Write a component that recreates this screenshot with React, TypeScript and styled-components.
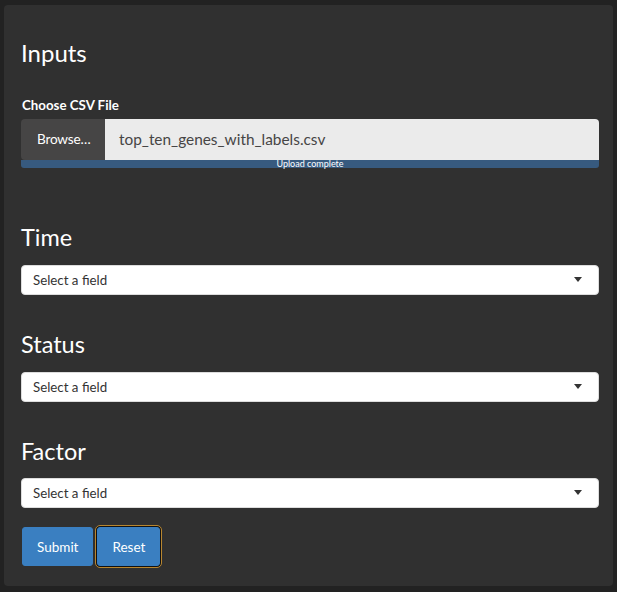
import React from 'react';
import styled, { createGlobalStyle, css } from 'styled-components';

const GlobalStyle = createGlobalStyle`
  html, body {
    margin: 0;
    background: #222222;
  }
  body {
    padding: 5px 4px 0;
    font-family: Lato, 'Open Sans', sans-serif;
    color: #ffffff;
  }
`;

const Well = styled.div`
  box-sizing: border-box;
  width: 609px;
  height: 581px;
  padding: 35px 14px 0 17px;
  background: #303030;
  border-radius: 4px;
`;

const Title = styled.h3`
  margin: 0;
  font-size: 24px;
  font-weight: 400;
  line-height: 1.1;
`;

const Label = styled.label`
  display: block;
  margin: 30.5px 0 5.25px 1px;
  font-size: 13.3px;
  font-weight: 700;
  line-height: 16.8px;
`;

const FileGroup = styled.div`
  display: flex;
  height: 41px;
`;

const BrowseButton = styled.span`
  display: flex;
  align-items: center;
  width: 84px;
  padding-left: 16px;
  box-sizing: border-box;
  background: #464545;
  border-radius: 4px 0 0 4px;
  font-size: 13.6px;
  letter-spacing: -0.2px;
`;

const FileName = styled.div`
  flex: 1;
  display: flex;
  align-items: center;
  padding-left: 14px;
  background: #ebebeb;
  color: #464545;
  border-radius: 0 4px 0 0;
  font-size: 15.4px;
`;

const Progress = styled.div`
  height: 8px;
  background: #375a7f;
  border-radius: 0 0 3px 3px;
  font-size: 9px;
  line-height: 8px;
  text-align: center;
  color: #ffffff;
`;

const Field = styled.div<{ $gap: number }>`
  margin-top: ${(p) => p.$gap}px;
`;

const FieldTitle = styled.h4`
  margin: 0 0 14px;
  font-size: 23.5px;
  font-weight: 400;
  line-height: 1.1;
`;

const Select = styled.div`
  position: relative;
  box-sizing: border-box;
  height: 30px;
  display: flex;
  align-items: center;
  padding-left: 11px;
  background: #ffffff;
  border: 1px solid #dddddd;
  border-radius: 4px;
  color: #333333;
  font-size: 13.3px;
`;

const Caret = styled.span`
  position: absolute;
  right: 16px;
  top: 11px;
  border-left: 4.5px solid transparent;
  border-right: 4.5px solid transparent;
  border-top: 5px solid #333333;
`;

const Actions = styled.div`
  display: flex;
  gap: 4px;
  margin: 19px 0 0 1px;
`;

const Button = styled.button<{ $focused?: boolean }>`
  height: 39px;
  padding: 0 14px;
  background: #3a7fc1;
  border: 1px solid #3a7fc1;
  border-radius: 3px;
  color: #ffffff;
  font-family: Lato, 'Open Sans', sans-serif;
  font-size: 13.5px;
  ${(p) =>
    p.$focused &&
    css`
      box-shadow: 0 0 0 1px #111111;
      outline: 1px solid #b8862f;
      outline-offset: 1px;
    `}
`;

const fields = [
  { name: 'Time', gap: 57 },
  { name: 'Status', gap: 37 },
  { name: 'Factor', gap: 37 },
];

const App = () => (
  <>
    <GlobalStyle />
    <Well>
      <Title>Inputs</Title>
      <Label>Choose CSV File</Label>
      <FileGroup>
        <BrowseButton>Browse…</BrowseButton>
        <FileName>top_ten_genes_with_labels.csv</FileName>
      </FileGroup>
      <Progress>Upload complete</Progress>
      {fields.map((field) => (
        <Field key={field.name} $gap={field.gap}>
          <FieldTitle>{field.name}</FieldTitle>
          <Select>
            Select a field
            <Caret />
          </Select>
        </Field>
      ))}
      <Actions>
        <Button>Submit</Button>
        <Button $focused>Reset</Button>
      </Actions>
    </Well>
  </>
);

export default App;
